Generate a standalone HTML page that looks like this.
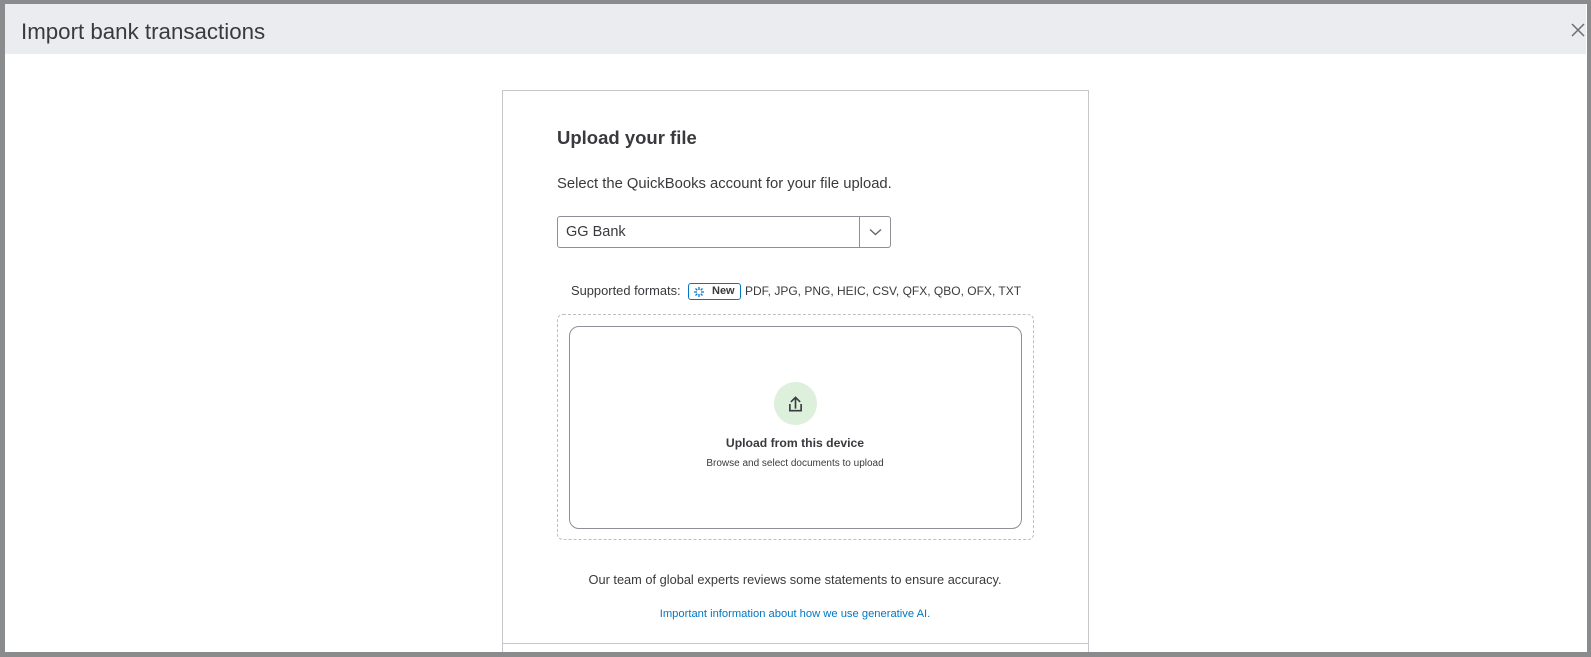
<!DOCTYPE html>
<html><head><style>
*{box-sizing:border-box;margin:0;padding:0}
body{width:1591px;height:657px;background:#fff;font-family:"Liberation Sans",sans-serif;color:#393a3d;position:relative;overflow:hidden}
.frame{position:absolute;left:0;top:0;width:1591px;height:657px;border:4px solid #8a8b8d;border-left-width:5px;border-bottom-width:5px}
.hdr{position:absolute;left:5px;top:4px;width:1581px;height:50px;background:#ebecf0}
.hdr h1{position:absolute;left:16px;top:17px;font-size:22.3px;line-height:1;font-weight:normal;color:#393a3d}
.card{position:absolute;left:502px;top:90px;width:587px;height:562px;border:1px solid #c6c7ca;border-bottom:none}
.div{position:absolute;left:502px;top:643px;width:587px;height:1px;background:#c6c7ca}
.t{position:absolute;white-space:nowrap;line-height:1}
.sel{position:absolute;left:557px;top:216px;width:334px;height:32px;border:1px solid #8d9096;border-radius:3px}
.sel span{position:absolute;left:8px;top:8px;font-size:14.5px;line-height:1;color:#393a3d}
.sel .arr{position:absolute;right:0;top:0;width:31px;height:30px;border-left:1px solid #8d9096}
.badge{position:absolute;left:688px;top:283px;width:53px;height:17px;border:1px solid #0077c5;border-radius:3px;font-size:11px;font-weight:bold;color:#393a3d}
.dash{position:absolute;left:557px;top:314px;width:477px;height:226px;border:1px dashed #babec5;border-radius:6px}
.box{position:absolute;left:569px;top:326px;width:453px;height:203px;border:1px solid #8d9096;border-radius:10px}
.circ{position:absolute;left:774px;top:382px;width:43px;height:43px;border-radius:50%;background:#ddf0dc}
.c{transform:translateX(-50%)}
</style></head><body>
<div class="hdr"><h1>Import bank transactions</h1>
<svg style="position:absolute;left:1565px;top:18px" width="16" height="16" viewBox="0 0 16 16"><path d="M2 2L14 14M14 2L2 14" stroke="#6b6c72" stroke-width="1.5"/></svg></div>
<div class="card"></div>
<div class="div"></div>
<div class="t" style="left:557px;top:129px;font-size:18.5px;font-weight:bold;color:#393a3d">Upload your file</div>
<div class="t" style="left:557px;top:177px;font-size:14.8px">Select the QuickBooks account for your file upload.</div>
<div class="sel"><span>GG Bank</span><div class="arr"><svg width="31" height="30" viewBox="0 0 31 30"><path d="M10 12.5L15.5 17.5L21 12.5" fill="none" stroke="#6b6c72" stroke-width="1.5"/></svg></div></div>
<div class="t" style="left:571px;top:285px;font-size:12.9px">Supported formats:</div>
<div class="badge"><svg style="position:absolute;left:4px;top:2px" width="12" height="12" viewBox="0 0 12 12"><g stroke="#0077c5" stroke-width="1.3"><path d="M6 1V4M6 8V11M1 6H4M8 6H11M2.5 2.5L4.3 4.3M7.7 7.7L9.5 9.5M9.5 2.5L7.7 4.3M4.3 7.7L2.5 9.5"/></g></svg><span style="position:absolute;left:23px;top:2px;line-height:1">New</span></div>
<div class="t" style="left:745px;top:285px;font-size:12px">PDF, JPG, PNG, HEIC, CSV, QFX, QBO, OFX, TXT</div>
<div class="dash"></div>
<div class="box"></div>
<div class="circ"><svg width="43" height="43" viewBox="0 0 42 42"><g fill="none" stroke="#393a3d" stroke-width="1.6"><path d="M21 26V15M16.5 19.5L21 15L25.5 19.5"/><path d="M15.5 21.5V28H26.5V21.5"/></g></svg></div>
<div class="t c" style="left:795px;top:437px;font-size:12.2px;font-weight:bold">Upload from this device</div>
<div class="t c" style="left:795px;top:459px;font-size:10px">Browse and select documents to upload</div>
<div class="t c" style="left:795px;top:574px;font-size:12.8px">Our team of global experts reviews some statements to ensure accuracy.</div>
<div class="t c" style="left:795px;top:609px;font-size:11.2px;color:#0077c5">Important information about how we use generative AI.</div>
<div class="frame"></div>
</body></html>
